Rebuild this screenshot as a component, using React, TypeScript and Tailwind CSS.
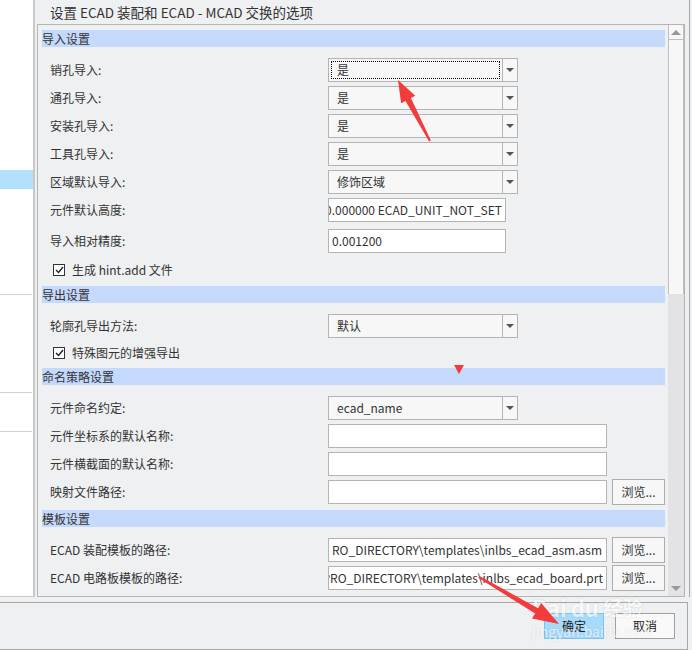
import React from "react";

type RowProps = {
  label: string;
  children: React.ReactNode;
  className?: string;
};

const Header = ({ title, className = "" }: { title: string; className?: string }) => (
  <div className={`h-[17px] bg-[#c4d9fc] text-[12px] leading-[17px] text-[#333] ${className}`}>
    {title}
  </div>
);

const Row = ({ label, children, className = "" }: RowProps) => (
  <div className={`flex h-[24px] items-center ${className}`}>
    <div className="w-[286px] pl-2 text-[12px] text-[#333]">{label}</div>
    {children}
  </div>
);

const Select = ({ value, focused = false }: { value: string; focused?: boolean }) => (
  <div className="flex h-[24px] w-[190px] border border-[#b4b4b4] bg-[#f7f7f7]">
    <div className="relative flex flex-1 items-center pl-2 text-[12px] text-[#333]">
      {focused && (
        <div className="absolute inset-[2px] border border-dotted border-black" />
      )}
      {value}
    </div>
    <div className="flex w-[15px] items-center justify-center border-l border-[#b4b4b4]">
      <div className="h-0 w-0 border-x-[4px] border-t-[4px] border-x-transparent border-t-[#555]" />
    </div>
  </div>
);

const Input = ({
  value = "",
  width,
  alignEnd = false,
}: {
  value?: string;
  width: string;
  alignEnd?: boolean;
}) => (
  <div
    className={`flex h-[24px] items-center overflow-hidden whitespace-nowrap border border-[#b4b4b4] bg-white px-[3px] text-[12px] text-[#333] ${width} ${
      alignEnd ? "justify-end" : "justify-start"
    }`}
  >
    {value}
  </div>
);

const Browse = () => (
  <div className="ml-[5px] flex h-[26px] w-[53px] shrink-0 items-center justify-center border border-[#adadad] bg-[#f7f7f7] text-[12px] text-[#333]">
    浏览...
  </div>
);

const Check = ({ label, className = "" }: { label: string; className?: string }) => (
  <div className={`flex h-[18px] items-center pl-[11px] text-[12px] text-[#333] ${className}`}>
    <div className="mr-[7px] flex h-[12px] w-[12px] items-center justify-center border border-[#333] bg-white">
      <svg width="9" height="8" viewBox="0 0 9 8">
        <path d="M1 4 L3.5 6.5 L8 1" fill="none" stroke="#222" strokeWidth="1.4" />
      </svg>
    </div>
    {label}
  </div>
);

export default function App() {
  return (
    <div className="relative h-[650px] w-[692px] overflow-hidden bg-[#eff0f2] font-['Noto_Sans_CJK_SC',sans-serif]">
      <div className="flex h-[597px]">
        {/* sidebar */}
        <div className="flex h-[597px] w-[35px] shrink-0 flex-col border-b border-r-2 border-[#c8c8c8] bg-white">
          <div className="h-[170px]" />
          <div className="h-[19px] bg-[#b3e0fc]" />
          <div className="h-[105px]" />
          <div className="h-px w-[32px] bg-[#d0d0d0]" />
          <div className="h-[97px]" />
          <div className="h-px w-[32px] bg-[#d0d0d0]" />
          <div className="h-[38px]" />
          <div className="h-px w-[32px] bg-[#d0d0d0]" />
        </div>

        {/* dialog body */}
        <div className="flex w-[655px] shrink-0 flex-col border-r border-[#a8a8a8]">
          <div className="flex h-[24px] items-center pl-[15px] text-[13.5px] text-[#333]">
            设置 ECAD 装配和 ECAD - MCAD 交换的选项
          </div>
          <div className="ml-[2px] flex h-[573px] w-[648px] border border-[#b4b4b4]">
            <div className="flex-1 overflow-hidden pl-[4px] pr-[3px] pt-[5px]">
              <Header title="导入设置" />
              <Row label="销孔导入:" className="mt-[11px]">
                <Select value="是" focused />
              </Row>
              <Row label="通孔导入:" className="mt-[4px]">
                <Select value="是" />
              </Row>
              <Row label="安装孔导入:" className="mt-[4px]">
                <Select value="是" />
              </Row>
              <Row label="工具孔导入:" className="mt-[4px]">
                <Select value="是" />
              </Row>
              <Row label="区域默认导入:" className="mt-[4px]">
                <Select value="修饰区域" />
              </Row>
              <Row label="元件默认高度:" className="mt-[4px]">
                <Input value="0.000000 ECAD_UNIT_NOT_SET" width="w-[178px]" alignEnd />
              </Row>
              <Row label="导入相对精度:" className="mt-[7px]">
                <Input value="0.001200" width="w-[178px]" />
              </Row>
              <Check label="生成 hint.add 文件" className="mt-[8px]" />

              <Header title="导出设置" className="mt-[7px]" />
              <Row label="轮廓孔导出方法:" className="mt-[11px]">
                <Select value="默认" />
              </Row>
              <Check label="特殊图元的增强导出" className="mt-[6px]" />

              <Header title="命名策略设置" className="mt-[6px]" />
              <Row label="元件命名约定:" className="mt-[11px]">
                <Select value="ecad_name" />
              </Row>
              <Row label="元件坐标系的默认名称:" className="mt-[4px]">
                <Input width="w-[279px]" />
              </Row>
              <Row label="元件横截面的默认名称:" className="mt-[4px]">
                <Input width="w-[279px]" />
              </Row>
              <Row label="映射文件路径:" className="mt-[4px]">
                <Input width="w-[279px]" />
                <Browse />
              </Row>

              <Header title="模板设置" className="mt-[6px]" />
              <Row label="ECAD 装配模板的路径:" className="mt-[11px]">
                <Input value="RO_DIRECTORY\templates\inlbs_ecad_asm.asm" width="w-[279px]" />
                <Browse />
              </Row>
              <Row label="ECAD 电路板模板的路径:" className="mt-[4px]">
                <Input
                  value="PRO_DIRECTORY\templates\inlbs_ecad_board.prt"
                  width="w-[279px]"
                  alignEnd
                />
                <Browse />
              </Row>
            </div>

            {/* scrollbar */}
            <div className="flex w-[16px] shrink-0 flex-col bg-[#e3e3e5]">
              <div className="flex h-[15px] items-center justify-center border-x border-b border-[#c0c0c0] bg-[#f7f7f7]">
                <div className="h-0 w-0 border-x-[5px] border-b-[5px] border-x-transparent border-b-[#999]" />
              </div>
              <div className="h-[254px] border-x border-[#c0c0c0] bg-[#f7f7f7]" />
              <div className="flex-1" />
              <div className="flex h-[15px] items-center justify-center">
                <div className="h-0 w-0 border-x-[5px] border-t-[5px] border-x-transparent border-t-[#999]" />
              </div>
            </div>
          </div>
        </div>
      </div>

      {/* footer */}
      <div className="mt-[5px] flex h-[48px] w-[688px] justify-end gap-[11px] border-y border-r border-[#a8a8a8] pr-[12px] pt-[10px]">
        <div className="flex h-[26px] w-[60px] items-center justify-center border border-[#7cc4f4] bg-[#a8dafb] text-[12px] text-[#222]">
          确定
        </div>
        <div className="flex h-[26px] w-[60px] items-center justify-center border border-[#a0a0a0] bg-[#f9f9f9] text-[12px] text-[#222]">
          取消
        </div>
      </div>

      {/* watermark */}
      <div className="pointer-events-none absolute left-[532px] top-[596px] flex flex-col leading-none text-white opacity-60 [text-shadow:0_0_2px_rgba(0,0,0,0.2)]">
        <div className="flex items-end gap-[4px] text-[22px] font-bold">
          <span>Bai</span>
          <span>du</span>
          <span className="text-[20px]">经验</span>
        </div>
        <div className="mt-[6px] text-[14px]">jingyan.baidu.com</div>
      </div>

      {/* annotations */}
      <svg
        className="pointer-events-none absolute left-0 top-0"
        width="692"
        height="650"
        viewBox="0 0 692 650"
      >
        <polygon
          fill="#f23b3b"
          points="398,80 415.3,95.8 410.9,98.1 430.9,140.5 429.1,141.5 405.5,100.9 401.1,103.2"
        />
        <polygon
          fill="#f23b3b"
          points="559,624 541.2,603 538.1,608.2 479.5,576.1 478.5,577.9 535.1,613.4 532,618.6"
        />
        <polygon fill="#f23b3b" points="454,365 464,365 459,374" />
      </svg>
    </div>
  );
}
